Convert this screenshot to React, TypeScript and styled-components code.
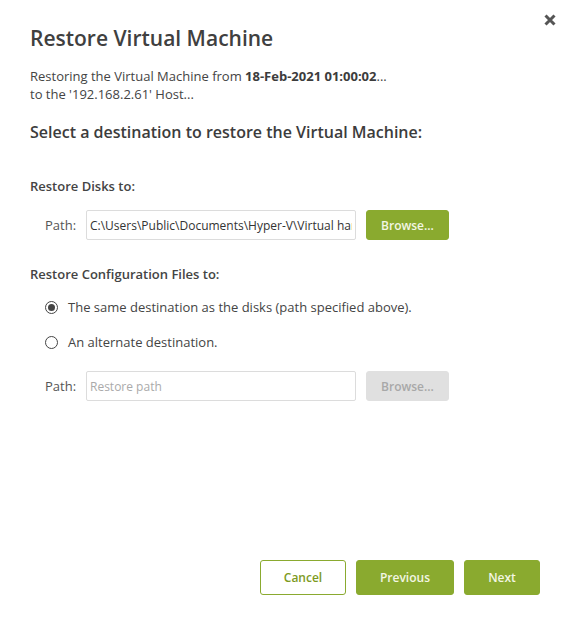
import React from "react";
import styled, {createGlobalStyle} from "styled-components";

const GlobalStyle = createGlobalStyle`
    html, body {
        margin: 0;
        padding: 0;
        background: #ffffff;
    }
`;

const Dialog = styled.div`
    position: relative;
    width: 570px;
    height: 620px;
    box-sizing: border-box;
    padding: 24px 30px 0;
    display: flex;
    flex-direction: column;
    font-family: "Open Sans", sans-serif;
    font-size: 13px;
    color: #444;
    background: #fff;
`;

const CloseButton = styled.button`
    position: absolute;
    top: 13px;
    right: 13px;
    width: 14px;
    height: 14px;
    padding: 0;
    background: none;
    border: none;
    color: #555;
    display: flex;
`;

const Title = styled.h1`
    margin: 0;
    font-size: 21px;
    line-height: 28px;
    font-weight: 600;
    color: #404040;
`;

const Description = styled.p`
    margin: 15px 0 0;
    line-height: 18px;
    color: #444;

    b {
        font-weight: 700;
        color: #3c3c3c;
    }
`;

const Heading = styled.h2`
    margin: 18px 0 0;
    font-size: 16px;
    line-height: 22px;
    font-weight: 600;
    color: #3c3c3c;
`;

const SectionLabel = styled.div<{$top: number}>`
    margin-top: ${(p) => p.$top}px;
    font-weight: 600;
    line-height: 18px;
    color: #444;
`;

const PathRow = styled.div<{$top: number}>`
    margin-top: ${(p) => p.$top}px;
    display: flex;
    align-items: center;
    padding-left: 15px;
`;

const PathLabel = styled.label`
    width: 41px;
    color: #555;
`;

const PathInput = styled.input`
    width: 270px;
    height: 30px;
    box-sizing: border-box;
    padding: 0 3px;
    border: 1px solid #dcdcdc;
    border-radius: 2px;
    font-family: inherit;
    font-size: 12px;
    color: #333;
    background: #fff;
    outline: none;

    &::placeholder {
        font-size: 12px;
        color: #aaa;
        opacity: 1;
    }
`;

const Button = styled.button<{$width: number; $height: number; $variant?: "outline" | "disabled"}>`
    width: ${(p) => p.$width}px;
    height: ${(p) => p.$height}px;
    box-sizing: border-box;
    padding: 0;
    border-radius: 3px;
    font-family: inherit;
    font-size: 12px;
    font-weight: 600;
    border: 1px solid ${(p) => (p.$variant === "disabled" ? "#e0e0e0" : "#8aaa2f")};
    background: ${(p) => (p.$variant === "outline" ? "#fff" : p.$variant === "disabled" ? "#e0e0e0" : "#8aaa2f")};
    color: ${(p) => (p.$variant === "outline" ? "#7d9a22" : p.$variant === "disabled" ? "#a8a8a8" : "#f3f6e4")};
`;

const BrowseSlot = styled.div`
    margin-left: 10px;
    display: flex;
`;

const RadioRow = styled.label<{$top: number}>`
    margin-top: ${(p) => p.$top}px;
    padding-left: 15px;
    display: flex;
    align-items: center;
    gap: 10px;
    line-height: 18px;
    color: #444;
`;

const RadioMark = styled.span<{$checked?: boolean}>`
    width: 13px;
    height: 13px;
    box-sizing: border-box;
    border: 1px solid #444;
    border-radius: 50%;
    display: flex;
    align-items: center;
    justify-content: center;

    &::after {
        content: "";
        display: ${(p) => (p.$checked ? "block" : "none")};
        width: 7px;
        height: 7px;
        border-radius: 50%;
        background: #444;
    }
`;

const Footer = styled.div`
    margin-top: auto;
    margin-bottom: 25px;
    display: flex;
    justify-content: flex-end;
    gap: 10px;
`;

export default function App() {
    return (
        <>
            <GlobalStyle/>
            <Dialog>
                <CloseButton aria-label="Close">
                    <svg width="14" height="14" viewBox="0 0 14 14">
                        <path d="M2.5 2.5 L11.5 11.5 M11.5 2.5 L2.5 11.5" stroke="currentColor" strokeWidth="3" fill="none"/>
                    </svg>
                </CloseButton>
                <Title>Restore Virtual Machine</Title>
                <Description>
                    Restoring the Virtual Machine from <b>18-Feb-2021 01:00:02</b>...<br/>
                    to the '192.168.2.61' Host...
                </Description>
                <Heading>Select a destination to restore the Virtual Machine:</Heading>
                <SectionLabel $top={34}>Restore Disks to:</SectionLabel>
                <PathRow $top={15}>
                    <PathLabel>Path:</PathLabel>
                    <PathInput readOnly value={"C:\\Users\\Public\\Documents\\Hyper-V\\Virtual hard disks\\"}/>
                    <BrowseSlot><Button $width={83} $height={30}>Browse...</Button></BrowseSlot>
                </PathRow>
                <SectionLabel $top={25}>Restore Configuration Files to:</SectionLabel>
                <RadioRow $top={15}>
                    <RadioMark $checked/>
                    The same destination as the disks (path specified above).
                </RadioRow>
                <RadioRow $top={17}>
                    <RadioMark/>
                    An alternate destination.
                </RadioRow>
                <PathRow $top={20}>
                    <PathLabel>Path:</PathLabel>
                    <PathInput disabled placeholder="Restore path"/>
                    <BrowseSlot><Button $width={83} $height={30} $variant="disabled">Browse...</Button></BrowseSlot>
                </PathRow>
                <Footer>
                    <Button $width={86} $height={35} $variant="outline">Cancel</Button>
                    <Button $width={98} $height={35}>Previous</Button>
                    <Button $width={76} $height={35}>Next</Button>
                </Footer>
            </Dialog>
        </>
    );
}
